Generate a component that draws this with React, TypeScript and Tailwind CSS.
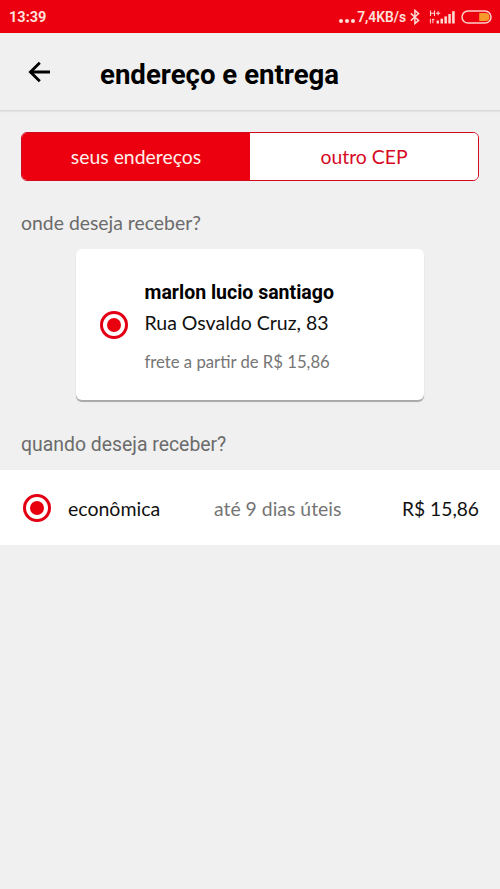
import React, { useState } from 'react';

type AddressTab = 'saved' | 'other';

const Radio: React.FC<{ checked: boolean; label: string }> = ({ checked, label }) => (
  <span
    role="radio"
    aria-checked={checked}
    aria-label={label}
    className="flex h-7 w-7 shrink-0 items-center justify-center rounded-full border-3 border-[#e30015] bg-white"
  >
    {checked && <span className="h-3.5 w-3.5 rounded-full bg-[#e8000f]" />}
  </span>
);

const StatusIcons: React.FC = () => (
  <>
    {/* Bluetooth */}
    <svg className="ml-[4px] h-4 w-[10px]" viewBox="0 0 10 16" fill="none" stroke="#ffd9d4" strokeWidth="1.5">
      <path d="M0.8 4.4 L8.6 11.4 L4.9 14.6 V1.4 L8.6 4.6 L0.8 11.6" />
    </svg>
    {/* Mobile network */}
    <svg className="ml-[9px] h-4 w-[26px]" viewBox="0 0 26 16">
      <g stroke="#ffd9d4" fill="none">
        <path d="M1.5 1.5 V7 M5.5 1.5 V7 M1.5 4.2 H5.5 M7 4.2 H11.2 M9.1 2.2 V6.3" strokeWidth="1.1" />
        <path d="M1.4 9.8 V14.5 M3.9 14.2 V9.8 M3 10.6 H5.4" strokeWidth="1" />
      </g>
      <g fill="#ffd9d4">
        <rect x="7.6" y="11.6" width="2.4" height="2.9" />
        <rect x="11.5" y="9.7" width="2.5" height="4.8" />
        <rect x="15.4" y="7.4" width="2.5" height="7.1" />
        <rect x="19.3" y="5" width="2.5" height="9.5" />
        <rect x="23.1" y="2.2" width="2.6" height="12.3" />
      </g>
    </svg>
    {/* Battery */}
    <svg className="ml-[6px] h-[14px] w-[31px]" viewBox="0 0 31 14">
      <rect x="1" y="1" width="29" height="12" rx="6" fill="none" stroke="#ffd0cb" strokeWidth="1.5" />
      <path d="M18.2 3 H24.5 A4 4 0 0 1 24.5 11 H18.2 Z" fill="#f59a2b" />
    </svg>
  </>
);

const StatusBar: React.FC = () => (
  <div className="flex h-[33px] items-center bg-[#ec000f] pr-2 pl-[9px] font-['Roboto',sans-serif] text-[#ffe1dc]">
    <span className="mt-[3px] text-[14.5px] font-bold">13:39</span>
    <div className="ml-auto flex items-center">
      <div className="mt-2 mr-[2px] flex gap-[2px]">
        <span className="h-1 w-1 rounded-full bg-[#ffe1dc]" />
        <span className="h-1 w-1 rounded-full bg-[#ffe1dc]" />
        <span className="h-1 w-1 rounded-full bg-[#ffe1dc]" />
      </div>
      <span className="text-[13.8px] font-semibold">7,4KB/s</span>
      <StatusIcons />
    </div>
  </div>
);

const Header: React.FC = () => (
  <header className="flex h-[78px] items-center border-b border-[#d8d8d8] pl-7 shadow-[0_1px_1px_#e3e3e3]">
    <button aria-label="voltar" className="w-[72px]">
      <svg className="h-[22px] w-[23px]" viewBox="0 0 23 22" fill="none" stroke="#000" strokeWidth="2.8">
        <path d="M22 11 H2.5 M11.8 1.7 L2.4 11 L11.8 20.3" />
      </svg>
    </button>
    <h1 className="mt-[6px] font-['Roboto',sans-serif] text-[27.6px] font-bold text-black">endereço e entrega</h1>
  </header>
);

export default function App() {
  const [tab, setTab] = useState<AddressTab>('saved');

  const tabClass = (id: AddressTab) =>
    `flex-1 cursor-pointer pt-px text-[19.4px] ${tab === id ? 'bg-[#ec000f] text-[#fff0ec]' : 'bg-white text-[#d6091f]'}`;

  return (
    <div className="min-h-screen bg-[#f0f0f0] font-['Lato',sans-serif] text-[19.5px] leading-6 text-[#111]">
      <StatusBar />
      <Header />

      <main>
        <div className="mx-[21px] mt-[21px] flex h-[49px] overflow-hidden rounded-md border border-[#d20a20]">
          <button className={tabClass('saved')} onClick={() => setTab('saved')}>
            seus endereços
          </button>
          <button className={tabClass('other')} onClick={() => setTab('other')}>
            outro CEP
          </button>
        </div>

        <h2 className="mt-[30px] ml-[21px] text-[19.4px] text-[#6b6b6b]">onde deseja receber?</h2>

        <div className="mx-[76px] mt-[14px] flex h-[151px] items-center rounded-md bg-white pl-6 shadow-[0_2px_1px_#a8a8a8]">
          <Radio checked label="marlon lucio santiago" />
          <div className="mt-[6px] ml-[16.5px]">
            <p className="font-['Roboto',sans-serif] text-[19.5px] font-bold text-black">marlon lucio santiago</p>
            <p className="mt-[6px]">Rua Osvaldo Cruz, 83</p>
            <p className="mt-[15px] text-[16.7px] text-[#757575]">frete a partir de R$ 15,86</p>
          </div>
        </div>

        <h2 className="mt-[33px] ml-[21px] font-['Roboto',sans-serif] text-[19.4px] text-[#6b6b6b]">quando deseja receber?</h2>

        <div className="mt-[13px] flex h-[75px] items-center bg-white pr-[21px] pl-[23px]">
          <Radio checked label="econômica" />
          <span className="mt-[2px] ml-[17px] w-[146px]">econômica</span>
          <span className="mt-[2px] text-[19.4px] text-[#757575]">até 9 dias úteis</span>
          <span className="mt-[2px] ml-auto text-[19.2px]">R$ 15,86</span>
        </div>
      </main>
    </div>
  );
}
